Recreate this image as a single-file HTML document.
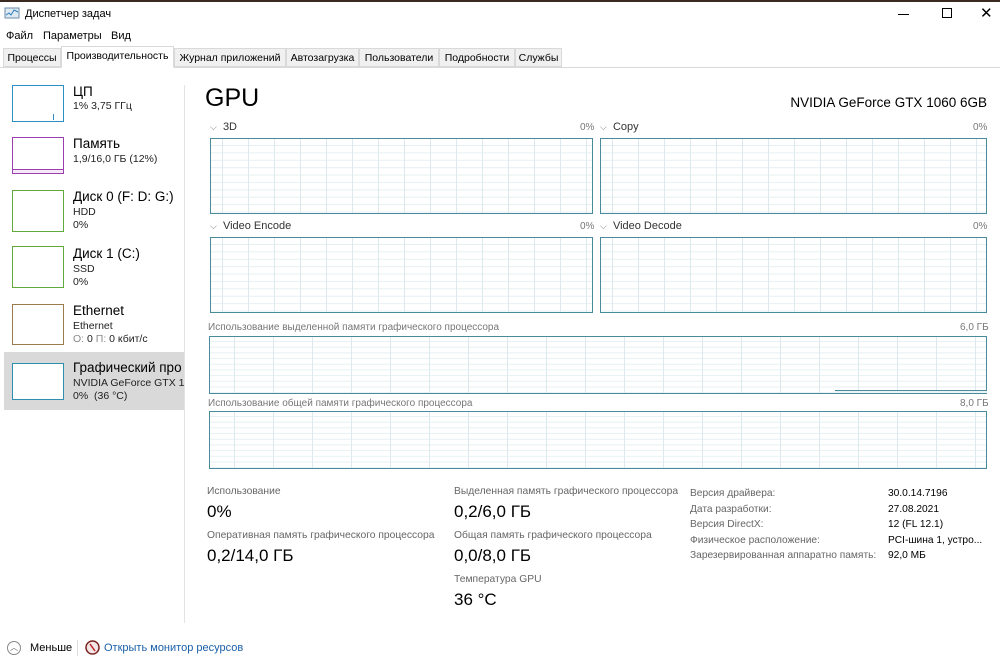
<!DOCTYPE html>
<html><head><meta charset="utf-8"><style>
*{margin:0;padding:0;box-sizing:border-box}
body{width:1000px;height:665px;background:#fff;font-family:"Liberation Sans","DejaVu Sans",sans-serif;color:#000;position:relative;overflow:hidden;font-size:11px}
.a{position:absolute;white-space:nowrap}
.tab{position:absolute;top:48px;height:19px;border:1px solid #d9d9d9;background:#f0f0f0;font-size:10.5px;padding:3px 0 0;text-align:center}
.g{position:absolute;border:1px solid #4a8b9b;background-color:#fff;
background-image:linear-gradient(90deg,#dce9ee 1px,transparent 1px),linear-gradient(#e6f0f3 1px,transparent 1px);
background-size:26px 100%,100% 7.4px;background-position:11px 0,0 6px}
.m{background-size:39px 100%,100% 5.7px;background-position:24px 0,0 4px}
.th{position:absolute;left:12px;width:52px;height:37px;border:1px solid;background:#fff}
.lb{font-size:11px;color:#333}
.t1{font-size:13.5px}
.sm{font-size:10.5px;color:#222}
.gl{font-size:10px;color:#777}
.big{font-size:17px;color:#000}
.k{font-size:10.3px;color:#666}
</style></head><body>
<div class="a" style="left:0;top:0;width:1000px;height:2px;background:#3a2a20"></div>
<svg class="a" style="left:4px;top:7px" width="16" height="14"><rect x="1" y="1" width="14" height="10" fill="#dfe9f2" stroke="#6b8ba8"/><polyline points="2,8 5,6 7,8 10,3 14,5" fill="none" stroke="#2a7fc0"/></svg>
<div class="a" style="left:25px;top:8px;font-size:11px">Диспетчер задач</div>
<div class="a" style="left:898px;top:14px;width:11px;height:1px;background:#000"></div>
<div class="a" style="left:942px;top:8px;width:10px;height:10px;border:1px solid #000"></div>
<div class="a" style="left:980px;top:4px;font-size:15px">✕</div>
<div class="a" style="left:6px;top:30px">Файл</div>
<div class="a" style="left:43px;top:30px">Параметры</div>
<div class="a" style="left:111px;top:30px">Вид</div>
<div class="a" style="left:0;top:67px;width:1000px;height:1px;background:#d9d9d9"></div>
<div class="tab" style="left:3px;width:58px">Процессы</div>
<div class="tab" style="left:61px;width:113px;top:46px;height:22px;background:#fff;border-bottom-color:#fff">Производительность</div>
<div class="tab" style="left:174px;width:112px">Журнал приложений</div>
<div class="tab" style="left:286px;width:73px">Автозагрузка</div>
<div class="tab" style="left:359px;width:80px">Пользователи</div>
<div class="tab" style="left:439px;width:76px">Подробности</div>
<div class="tab" style="left:515px;width:47px">Службы</div>

<div class="a" style="left:184px;top:85px;width:1px;height:538px;background:#e3e3e3"></div>
<div class="th" style="top:85px;border-color:#2f8fc4"><div class="a" style="left:40px;top:28px;width:1px;height:6px;background:#2f8fc4"></div></div>
<div class="a t1" style="left:73px;top:84px">ЦП</div><div class="a sm" style="left:73px;top:100px">1% 3,75 ГГц</div>
<div class="th" style="top:137px;border-color:#9b3fae"><div class="a" style="left:0;top:31px;width:50px;height:4px;border-top:1px solid #9b3fae;background:#f4e8f7"></div></div>
<div class="a t1" style="left:73px;top:136px">Память</div><div class="a sm" style="left:73px;top:153px">1,9/16,0 ГБ (12%)</div>
<div class="th" style="top:190px;height:42px;border-color:#5faa3a"></div>
<div class="a t1" style="left:73px;top:189px">Диск 0 (F: D: G:)</div><div class="a sm" style="left:73px;top:206px">HDD</div><div class="a sm" style="left:73px;top:219px">0%</div>
<div class="th" style="top:246px;height:42px;border-color:#5faa3a"></div>
<div class="a t1" style="left:73px;top:246px">Диск 1 (C:)</div><div class="a sm" style="left:73px;top:263px">SSD</div><div class="a sm" style="left:73px;top:276px">0%</div>
<div class="th" style="top:304px;height:41px;border-color:#9c7b4a"></div>
<div class="a t1" style="left:73px;top:303px">Ethernet</div><div class="a sm" style="left:73px;top:320px">Ethernet</div><div class="a sm" style="left:73px;top:333px"><span style="color:#888">О:</span> 0 <span style="color:#888">П:</span> 0 кбит/с</div>
<div class="a" style="left:4px;top:352px;width:180px;height:58px;background:#d9d9d9;overflow:hidden">
<div class="th" style="left:8px;top:11px;border-color:#2f8fb0"></div>
<div class="a t1" style="left:69px;top:8px">Графический про</div>
<div class="a sm" style="left:69px;top:25px">NVIDIA GeForce GTX 106</div>
<div class="a sm" style="left:69px;top:38px">0%&nbsp; (36 °C)</div></div>

<div class="a" style="left:205px;top:84px;font-size:25px">GPU</div>
<div class="a" style="right:13px;top:95px;font-size:13.5px">NVIDIA GeForce GTX 1060 6GB</div>

<div class="a lb" style="left:210px;top:121px"><span style="color:#777;font-size:9px">⌵</span>&nbsp; 3D</div><div class="a gl" style="left:580px;top:122px">0%</div>
<div class="g" style="left:210px;top:138px;width:383px;height:76px"></div>
<div class="a lb" style="left:600px;top:121px"><span style="color:#777;font-size:9px">⌵</span>&nbsp; Copy</div><div class="a gl" style="left:973px;top:122px">0%</div>
<div class="g" style="left:600px;top:138px;width:387px;height:76px"></div>
<div class="a lb" style="left:210px;top:220px"><span style="color:#777;font-size:9px">⌵</span>&nbsp; Video Encode</div><div class="a gl" style="left:580px;top:221px">0%</div>
<div class="g" style="left:210px;top:237px;width:383px;height:76px"></div>
<div class="a lb" style="left:600px;top:220px"><span style="color:#777;font-size:9px">⌵</span>&nbsp; Video Decode</div><div class="a gl" style="left:973px;top:221px">0%</div>
<div class="g" style="left:600px;top:237px;width:387px;height:76px"></div>

<div class="a gl" style="left:208px;top:322px">Использование выделенной памяти графического процессора</div><div class="a gl" style="left:960px;top:322px">6,0 ГБ</div>
<div class="g m" style="left:209px;top:336px;width:778px;height:58px"><div class="a" style="left:625px;top:53px;width:152px;height:3px;border-top:1px solid #4a8b9b;background:#eaf3f6"></div></div>
<div class="a gl" style="left:208px;top:398px">Использование общей памяти графического процессора</div><div class="a gl" style="left:960px;top:398px">8,0 ГБ</div>
<div class="g m" style="left:209px;top:411px;width:778px;height:58px"></div>

<div class="a k" style="left:207px;top:486px">Использование</div><div class="a big" style="left:207px;top:502px">0%</div>
<div class="a k" style="left:207px;top:530px">Оперативная память графического процессора</div><div class="a big" style="left:207px;top:546px">0,2/14,0 ГБ</div>
<div class="a k" style="left:454px;top:486px">Выделенная память графического процессора</div><div class="a big" style="left:454px;top:502px">0,2/6,0 ГБ</div>
<div class="a k" style="left:454px;top:530px">Общая память графического процессора</div><div class="a big" style="left:454px;top:546px">0,0/8,0 ГБ</div>
<div class="a k" style="left:454px;top:574px">Температура GPU</div><div class="a big" style="left:454px;top:590px">36 °C</div>

<div class="a k" style="left:690px;top:486px;line-height:15.5px;font-size:10.2px">Версия драйвера:<br>Дата разработки:<br>Версия DirectX:<br>Физическое расположение:<br>Зарезервированная аппаратно память:</div>
<div class="a" style="left:888px;top:486px;line-height:15.5px;font-size:10.2px">30.0.14.7196<br>27.08.2021<br>12 (FL 12.1)<br>PCI-шина 1, устро...<br>92,0 МБ</div>

<div class="a" style="left:7px;top:641px;width:14px;height:14px;border:1px solid #888;border-radius:50%;font-size:8px;color:#666;text-align:center;line-height:12px">︿</div>
<div class="a" style="left:30px;top:642px;font-size:11px">Меньше</div>
<div class="a" style="left:77px;top:640px;width:1px;height:16px;background:#ddd"></div>
<svg class="a" style="left:85px;top:640px" width="15" height="15"><circle cx="7.5" cy="7.5" r="6.5" fill="#f3e6e6" stroke="#7a2222" stroke-width="1.5"/><line x1="5" y1="4" x2="10" y2="11" stroke="#b22" stroke-width="1.5"/></svg>
<div class="a" style="left:104px;top:642px;font-size:11px;color:#1a5fa8">Открыть монитор ресурсов</div>
</body></html>
